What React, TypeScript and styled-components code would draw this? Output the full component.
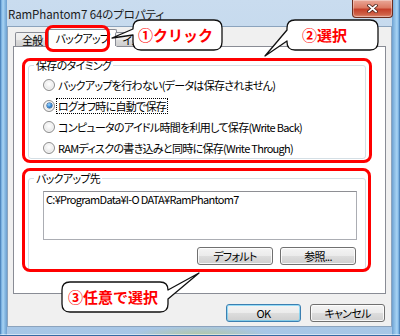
import React from 'react';
import styled, { createGlobalStyle } from 'styled-components';

const GlobalStyle = createGlobalStyle`
  html, body {
    margin: 0;
    padding: 0;
    background: #fff;
  }
  body {
    font-family: "Noto Sans CJK JP", "Noto Sans", sans-serif;
    font-size: 11px;
    color: #000;
  }
  * {
    box-sizing: border-box;
  }
`;

const Window = styled.div`
  position: relative;
  width: 400px;
  height: 336px;
  display: flex;
  flex-direction: column;
  padding: 0 8px 9px 7px;
  overflow: hidden;
  font-feature-settings: "palt";
  letter-spacing: -0.7px;
  background:
    linear-gradient(90deg, #3569a3 0px, #6ea8dc 1px, #a9d4f4 3px, #86b8e2 5px, #6d9fcf 7px) left top / 7px 100% no-repeat,
    linear-gradient(270deg, #3569a3 0px, #6ea8dc 1px, #a9d4f4 3px, #86b8e2 6px, #6d9fcf 8px) right top / 8px 100% no-repeat,
    radial-gradient(ellipse 70px 10px at 200px 336px, rgba(190, 200, 110, 0.6), transparent),
    linear-gradient(180deg, #c9dcef 0%, #bed4ea 40%, #a7c6e6 100%);
  box-shadow: inset 0 -1px 0 #3569a3, inset 0 -2px 0 rgba(255, 255, 255, 0.5);
`;

const TitleBar = styled.div`
  height: 26px;
  flex-shrink: 0;
  display: flex;
  justify-content: space-between;
  align-items: flex-start;
`;

const Title = styled.div`
  padding: 6px 0 0 1px;
  font-size: 11.5px;
  line-height: 16px;
  letter-spacing: -0.1px;
  color: #1b1b1b;
`;

const CloseButton = styled.div`
  width: 41px;
  height: 18px;
  margin-right: -1px;
  border: 1px solid #6b2d1f;
  border-top: none;
  border-radius: 0 0 4px 4px;
  background: linear-gradient(180deg, #eaa898 0%, #dc7a63 45%, #c5402a 55%, #cf6248 85%, #e0907a 100%);
  box-shadow: inset 0 0 0 1px rgba(255, 255, 255, 0.35);
  display: flex;
  align-items: center;
  justify-content: center;
`;

const Client = styled.div`
  flex: 1;
  display: flex;
  flex-direction: column;
  background: #f0f0f0;
  border: 1px solid #8ba3bd;
  padding: 2px 5px 4px;
`;

const TabStrip = styled.div`
  position: relative;
  z-index: 1;
  height: 18px;
  margin-bottom: -1px;
  padding-left: 2px;
  display: flex;
  align-items: flex-end;
`;

const Tab = styled.div<{ $active?: boolean }>`
  height: ${(p) => (p.$active ? 18 : 14)}px;
  margin: 0 ${(p) => (p.$active ? -2 : 0)}px ${(p) => (p.$active ? 0 : 1)}px;
  padding: ${(p) => (p.$active ? 0 : 1)}px ${(p) => (p.$active ? 7 : 6)}px 0;
  border: 1px solid #898c95;
  border-bottom: ${(p) => (p.$active ? '1px solid #fff' : 'none')};
  border-radius: 2px 2px 0 0;
  background: ${(p) =>
    p.$active ? '#fff' : 'linear-gradient(180deg, #f2f2f2 0%, #ebebeb 50%, #dddddd 51%, #cfcfcf 100%)'};
  line-height: 13px;
  white-space: nowrap;
  display: flex;
  align-items: center;
`;

const Panel = styled.div`
  height: 248px;
  flex-shrink: 0;
  background: #fff;
  border: 1px solid #898c95;
  padding: 11px 19px 0 14px;
  display: flex;
  flex-direction: column;
`;

const Group = styled.fieldset<{ $gap?: number }>`
  margin: ${(p) => p.$gap ?? 0}px 0 0;
  min-width: 0;
  width: 338px;
  border: 1px solid #d5dfe5;
  border-radius: 3px;
  padding: 0 8px 0 14px;
`;

const GroupBody = styled.div<{ $padBottom?: number }>`
  display: flex;
  flex-direction: column;
  padding-bottom: ${(p) => p.$padBottom ?? 0}px;
`;

const Legend = styled.legend`
  margin-left: -9px;
  padding: 0 2px;
  line-height: 14px;
`;

const RadioList = styled.div`
  padding-top: 2px;
  display: flex;
  flex-direction: column;
`;

const RadioRow = styled.div`
  height: 21px;
  display: flex;
  align-items: center;
`;

const RadioDot = styled.span<{ $checked?: boolean }>`
  position: relative;
  width: 12px;
  height: 12px;
  flex-shrink: 0;
  border-radius: 50%;
  border: 1px solid #8d8d8d;
  background: radial-gradient(circle at 50% 40%, #ffffff 0%, #ececec 55%, #d4d4d4 100%);
  box-shadow: inset 0 0 0 1px #f7f7f7;

  &::after {
    content: '';
    display: ${(p) => (p.$checked ? 'block' : 'none')};
    position: absolute;
    left: 2.5px;
    top: 2.5px;
    width: 5px;
    height: 5px;
    border-radius: 50%;
    background: radial-gradient(circle at 40% 35%, #9fd8ff 0%, #2a7fd0 55%, #133f78 100%);
    box-shadow: 0 0 0 0.5px #1b4f8a;
  }
`;

const RadioLabel = styled.span<{ $focus?: boolean }>`
  margin-left: 2px;
  padding: 0 1px;
  line-height: 14px;
  white-space: nowrap;
  outline: ${(p) => (p.$focus ? '1px dotted #000' : 'none')};
`;

const TextBox = styled.div`
  margin-top: 6px;
  height: 49px;
  border: 1px solid #abadb3;
  border-top-color: #8e8f94;
  background: #fff;
  padding: 0 2px;
  line-height: 14px;
  white-space: nowrap;
`;

const ButtonRow = styled.div<{ $top: number; $gap: number }>`
  margin-top: ${(p) => p.$top}px;
  display: flex;
  justify-content: flex-end;
  gap: ${(p) => p.$gap}px;
  padding-right: 1px;
`;

const Button = styled.div<{ $w: number; $default?: boolean }>`
  width: ${(p) => p.$w}px;
  height: 18px;
  border: 1px solid ${(p) => (p.$default ? '#3c7fb1' : '#707070')};
  border-radius: 3px;
  background: linear-gradient(180deg, #f4f4f4 0%, #ebebeb 50%, #dddddd 51%, #cfcfcf 100%);
  box-shadow: inset 0 0 0 1px ${(p) => (p.$default ? 'rgba(72, 200, 250, 0.55)' : 'rgba(255, 255, 255, 0.8)')};
  display: flex;
  align-items: center;
  justify-content: center;
  line-height: 14px;
`;

const Highlight = styled.div<{ $x: number; $y: number; $w: number; $h: number }>`
  position: absolute;
  left: ${(p) => p.$x}px;
  top: ${(p) => p.$y}px;
  width: ${(p) => p.$w}px;
  height: ${(p) => p.$h}px;
  border: 3px solid #ff0000;
  border-radius: 8px;
  z-index: 2;
  pointer-events: none;
`;

const Bubble = styled.div<{ $x: number; $y: number; $w: number; $pad: number }>`
  position: absolute;
  left: ${(p) => p.$x}px;
  top: ${(p) => p.$y}px;
  width: ${(p) => p.$w}px;
  height: 30px;
  z-index: 3;
  padding-left: ${(p) => p.$pad}px;
  display: flex;
  align-items: center;
  color: #ff0000;
  font-size: 15px;
  font-weight: 700;
  line-height: 18px;
  letter-spacing: 0;
  font-feature-settings: normal;
  white-space: nowrap;
`;

const BubbleShape = styled.svg`
  position: absolute;
  left: 0;
  top: 0;
  overflow: visible;
  z-index: -1;
`;

type CalloutProps = {
  x: number;
  y: number;
  w: number;
  pad: number;
  path: string;
  children: React.ReactNode;
};

const Callout = ({ x, y, w, pad, path, children }: CalloutProps) => (
  <Bubble $x={x} $y={y} $w={w} $pad={pad}>
    <BubbleShape width={w} height={30}>
      <path d={path} fill="#fff" stroke="#111" strokeWidth={1.3} strokeLinejoin="round" />
    </BubbleShape>
    {children}
  </Bubble>
);

const options = [
  'バックアップを行わない(データは保存されません)',
  'ログオフ時に自動で保存',
  'コンピュータのアイドル時間を利用して保存(Write Back)',
  'RAMディスクの書き込みと同時に保存(Write Through)',
];

export default function App() {
  return (
    <>
      <GlobalStyle />
      <Window>
        <TitleBar>
          <Title>RamPhantom7 64のプロパティ</Title>
          <CloseButton>
            <svg width="11" height="9" viewBox="0 0 11 9">
              <path d="M2 1.5 L9 7.5 M9 1.5 L2 7.5" stroke="#4a2018" strokeWidth="3.4" strokeLinecap="square" />
              <path d="M2 1.5 L9 7.5 M9 1.5 L2 7.5" stroke="#fff" strokeWidth="1.8" strokeLinecap="square" />
            </svg>
          </CloseButton>
        </TitleBar>

        <Client>
          <TabStrip>
            <Tab>全般</Tab>
            <Tab $active>バックアップ</Tab>
            <Tab>イメージ</Tab>
          </TabStrip>

          <Panel>
            <Group>
              <Legend>保存のタイミング</Legend>
              <RadioList>
                {options.map((label, i) => (
                  <RadioRow key={label}>
                    <RadioDot $checked={i === 1} />
                    <RadioLabel $focus={i === 1}>{label}</RadioLabel>
                  </RadioRow>
                ))}
              </RadioList>
            </Group>

            <Group $gap={12}>
              <Legend>バックアップ先</Legend>
              <GroupBody $padBottom={5}>
                <TextBox>C:¥ProgramData¥I-O DATA¥RamPhantom7</TextBox>
                <ButtonRow $top={7} $gap={7}>
                  <Button $w={76}>デフォルト</Button>
                  <Button $w={76}>参照...</Button>
                </ButtonRow>
              </GroupBody>
            </Group>
          </Panel>

          <ButtonRow $top={10} $gap={9}>
            <Button $w={75} $default>OK</Button>
            <Button $w={75}>キャンセル</Button>
          </ButtonRow>
        </Client>

        <Highlight $x={45} $y={25} $w={65} $h={27} />
        <Highlight $x={22} $y={58} $w={350} $h={105} />
        <Highlight $x={22} $y={168} $w={349} $h={104} />

        <Callout
          x={133}
          y={20}
          w={89}
          pad={5}
          path="M8 0 H81 Q89 0 89 8 V22 Q89 30 81 30 H8 Q0 30 0 22 V15 L-21 18 L0 9 V8 Q0 0 8 0 Z"
        >
          ①クリック
        </Callout>
        <Callout
          x={287}
          y={20}
          w={91}
          pad={15}
          path="M8 0 H83 Q91 0 91 8 V22 Q91 30 83 30 H8 Q0 30 0 22 V21 L-22 36 L0 10 V8 Q0 0 8 0 Z"
        >
          ②選択
        </Callout>
        <Callout
          x={62}
          y={282}
          w={106}
          pad={6}
          path="M8 0 H98 Q106 0 106 8 L137 -9 L106 17 V22 Q106 30 98 30 H8 Q0 30 0 22 V8 Q0 0 8 0 Z"
        >
          ③任意で選択
        </Callout>
      </Window>
    </>
  );
}
